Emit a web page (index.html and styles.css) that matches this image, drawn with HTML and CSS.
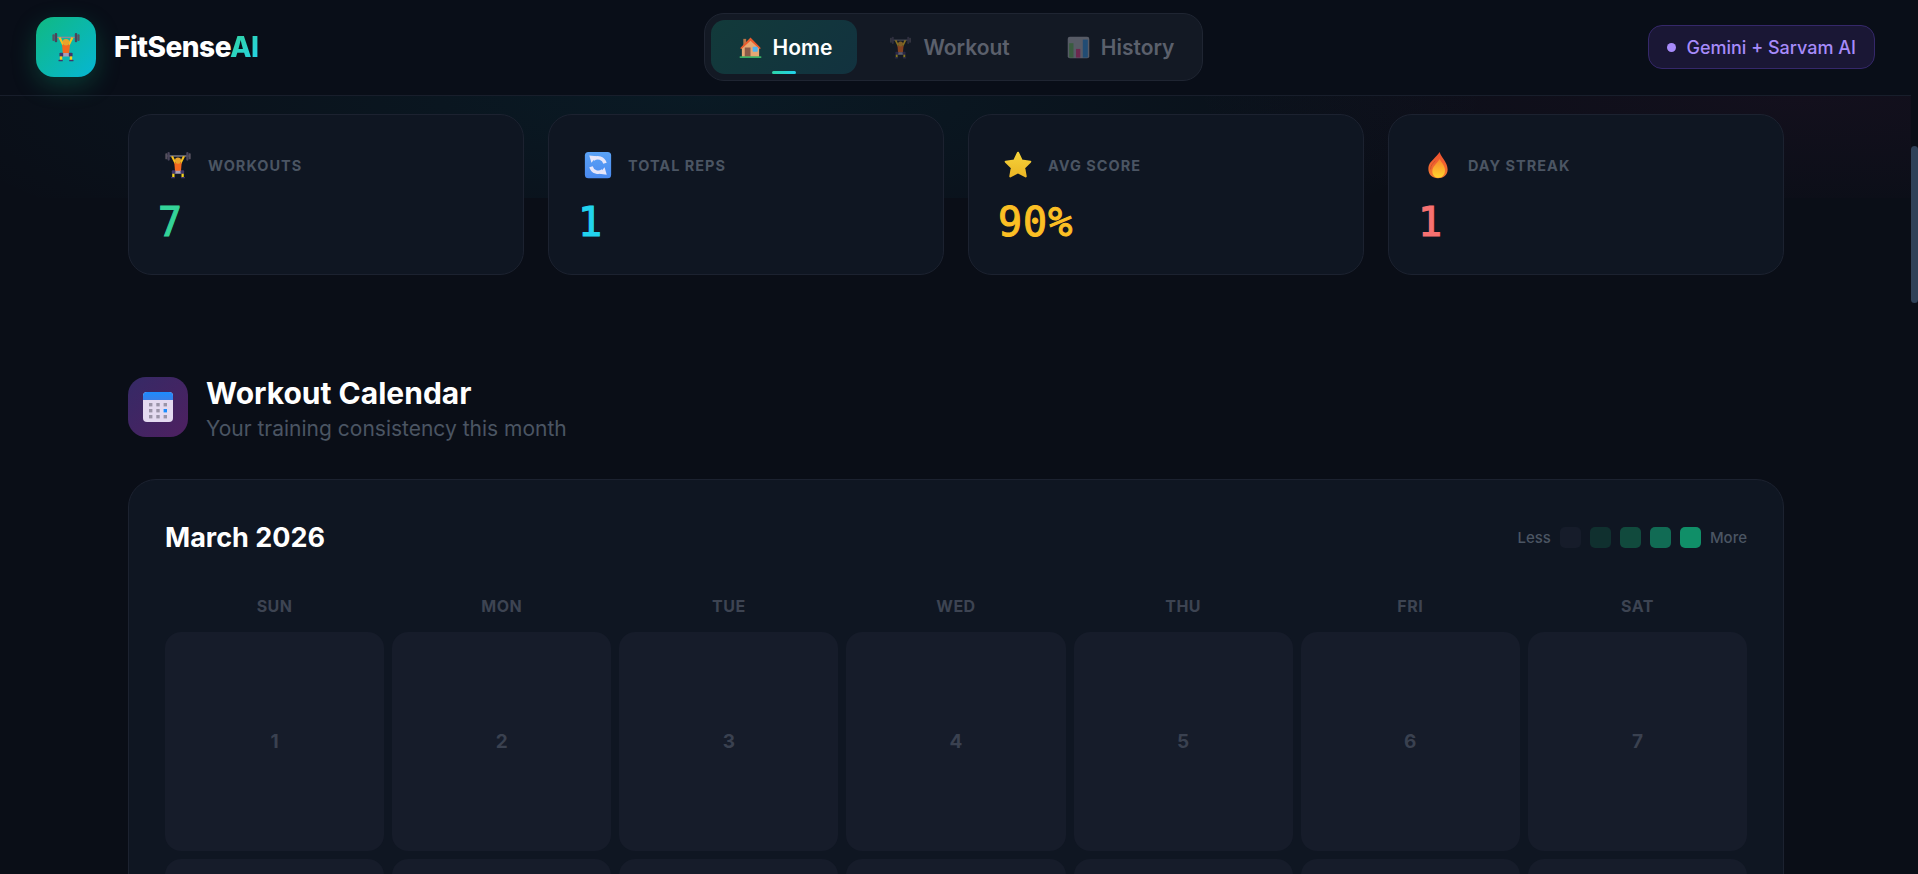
FILE: index.html
```html
<!DOCTYPE html>
<html lang="en">
<head>
  <meta charset="UTF-8">
  <title>FitSenseAI</title>
  <link rel="stylesheet" href="styles.css">
</head>
<body>

  <!-- emoji drawings, reused below -->
  <svg class="defs" width="0" height="0">
    <defs>
      <linearGradient id="syncbg" x1="0" y1="0" x2="0" y2="1">
        <stop offset="0" stop-color="#5aa2f6"/>
        <stop offset="1" stop-color="#4a8af0"/>
      </linearGradient>
      <linearGradient id="stargrad" x1="0" y1="0" x2="0" y2="1">
        <stop offset="0" stop-color="#f5d23a"/>
        <stop offset="1" stop-color="#ecb725"/>
      </linearGradient>
      <linearGradient id="firegrad" x1="0" y1="0" x2="0" y2="1">
        <stop offset="0" stop-color="#ee5030"/>
        <stop offset="1" stop-color="#f27a30"/>
      </linearGradient>
      <linearGradient id="firein" x1="0" y1="0" x2="0" y2="1">
        <stop offset="0" stop-color="#f8852c"/>
        <stop offset="1" stop-color="#ffd52e"/>
      </linearGradient>
      <linearGradient id="calbar" x1="0" y1="0" x2="0" y2="1">
        <stop offset="0" stop-color="#1c8cff"/>
        <stop offset="1" stop-color="#3a7fe8"/>
      </linearGradient>
    </defs>
    <symbol id="lifter" viewBox="0 0 32 32">
      <rect x="4" y="5" width="24" height="1.4" fill="#8d8a96"/>
      <rect x="1.5" y="2.5" width="2.4" height="7" rx="1" fill="#57525f"/>
      <rect x="4" y="1" width="2.6" height="10" rx="1.2" fill="#49445a"/>
      <rect x="25.4" y="1" width="2.6" height="10" rx="1.2" fill="#49445a"/>
      <rect x="28.1" y="2.5" width="2.4" height="7" rx="1" fill="#57525f"/>
      <path d="M8 6.2 L10.4 5.6 L13.4 12 L12.4 15 Z" fill="#f7c11e"/>
      <path d="M24 6.2 L21.6 5.6 L18.6 12 L19.6 15 Z" fill="#f7c11e"/>
      <path d="M11.8 13.5 L20.2 13.5 L19.4 23 L12.6 23 Z" fill="#f4691f"/>
      <circle cx="16" cy="11" r="3.5" fill="#eaa32a"/>
      <path d="M12.6 22.5 H19.4 L20.4 26 H11.6 Z" fill="#a79fb8"/>
      <rect x="9" y="22" width="4" height="4.4" rx="1" fill="#41366a"/>
      <rect x="19" y="22" width="4" height="4.4" rx="1" fill="#41366a"/>
      <rect x="9.4" y="26" width="2.6" height="4" fill="#f3d21e"/>
      <rect x="20" y="26" width="2.6" height="4" fill="#f3d21e"/>
      <rect x="8" y="29.6" width="4.6" height="1.6" rx=".6" fill="#41366a"/>
      <rect x="19.4" y="29.6" width="4.6" height="1.6" rx=".6" fill="#41366a"/>
    </symbol>
    <symbol id="house" viewBox="0 0 32 32">
      <rect x="6" y="4" width="4" height="10" fill="#b8754a"/>
      <path d="M4 15 L16 4 L28 15 V29 H4 Z" fill="#e6a873"/>
      <path d="M1.5 17 L16 2 L30.5 17 L28.5 18 L16 6.5 L3.5 18 Z" fill="#ea5a2c"/>
      <rect x="8" y="16" width="8" height="13" fill="#8a5a48"/>
      <rect x="19" y="15" width="7" height="7" rx="1" fill="#4fb4f0"/>
      <rect x="1" y="28.4" width="30" height="2" fill="#3fc46c"/>
    </symbol>
    <symbol id="bars" viewBox="0 0 32 32">
      <rect x="1" y="1" width="30" height="30" rx="3" fill="#9a9ca8"/>
      <rect x="3" y="10" width="6" height="20" fill="#5f9f5a"/>
      <rect x="12.5" y="18" width="6" height="12" fill="#c23a78"/>
      <rect x="22" y="5" width="7" height="25" fill="#2f7fc4"/>
    </symbol>
    <symbol id="sync" viewBox="0 0 32 32">
      <rect x="1" y="1" width="30" height="30" rx="4" fill="url(#syncbg)"/>
      <path d="M24 14 A8.5 8.5 0 0 0 10.5 9.5" fill="none" stroke="#e6e6fa" stroke-width="4"/>
      <path d="M6 5 L14.5 6 L8.5 13.5 Z" fill="#e6e6fa"/>
      <path d="M8 18 A8.5 8.5 0 0 0 21.5 22.5" fill="none" stroke="#e6e6fa" stroke-width="4"/>
      <path d="M26 27 L17.5 26 L23.5 18.5 Z" fill="#e6e6fa"/>
    </symbol>
    <symbol id="star" viewBox="0 0 32 32">
      <path d="M16 2 L20.2 10.8 L30 12.2 L23 19 L24.8 29 L16 24.4 L7.2 29 L9 19 L2 12.2 L11.8 10.8 Z" fill="url(#stargrad)" stroke="url(#stargrad)" stroke-width="2.4" stroke-linejoin="round"/>
    </symbol>
    <symbol id="fire" viewBox="0 0 32 32">
      <path d="M18 1 C19 7 27 12 27 21 C27 27.5 22 31 16 31 C9.5 31 5 27 5 20.5 C5 14 9 11.5 11.5 8.5 C13.5 6 16 4 18 1 Z" fill="url(#firegrad)"/>
      <path d="M18 9 C19.5 13 24 16 24 22 C24 27 21 30.5 16.5 30.5 C12 30.5 9.5 27 9.5 23 C9.5 18 14 15 18 9 Z" fill="url(#firein)"/>
      <path d="M7.5 21 C7.5 16 10.5 14 13 11" fill="none" stroke="#c9502a" stroke-width="1"/>
    </symbol>
    <symbol id="calendar" viewBox="0 0 30 30">
      <rect x="0" y="0" width="30" height="30" rx="4" fill="#e4daf0"/>
      <path d="M0 8 V4 A4 4 0 0 1 4 0 H26 A4 4 0 0 1 30 4 V8 Z" fill="url(#calbar)"/>
      <g fill="#9b94a8">
        <rect x="6" y="11" width="3.4" height="3.4"/>
        <rect x="13.3" y="11" width="3.4" height="3.4"/>
        <rect x="20.6" y="11" width="3.4" height="3.4"/>
        <rect x="6" y="17" width="3.4" height="3.4"/>
        <rect x="13.3" y="17" width="3.4" height="3.4"/>
        <rect x="6" y="23" width="3.4" height="3.4"/>
        <rect x="13.3" y="23" width="3.4" height="3.4"/>
        <rect x="20.6" y="23" width="3.4" height="3.4"/>
      </g>
      <rect x="20.6" y="17" width="3.4" height="3.4" fill="#1c8cff"/>
    </symbol>
  </svg>

  <div class="page">

    <header class="topbar">
      <div class="brand">
        <div class="brand-icon"><svg class="ico-logo"><use href="#lifter"/></svg></div>
        <div class="brand-name">FitSense<span class="ai">AI</span></div>
      </div>

      <nav class="tabs">
        <a class="tab active"><svg class="ico-tab"><use href="#house"/></svg>Home</a>
        <a class="tab"><svg class="ico-tab"><use href="#lifter"/></svg>Workout</a>
        <a class="tab"><svg class="ico-tab"><use href="#bars"/></svg>History</a>
      </nav>

      <div class="engine"><span class="dot"></span>Gemini + Sarvam AI</div>
    </header>

    <main class="content">

      <!-- stats -->
      <section class="stats">
        <div class="stat">
          <div class="stat-head"><svg class="ico-stat"><use href="#lifter"/></svg>WORKOUTS</div>
          <div class="stat-value green">7</div>
        </div>
        <div class="stat">
          <div class="stat-head"><svg class="ico-stat"><use href="#sync"/></svg>TOTAL REPS</div>
          <div class="stat-value cyan">1</div>
        </div>
        <div class="stat">
          <div class="stat-head"><svg class="ico-stat"><use href="#star"/></svg>AVG SCORE</div>
          <div class="stat-value amber">90%</div>
        </div>
        <div class="stat">
          <div class="stat-head"><svg class="ico-stat"><use href="#fire"/></svg>DAY STREAK</div>
          <div class="stat-value red">1</div>
        </div>
      </section>

      <!-- calendar -->
      <section class="section-head">
        <div class="section-icon"><svg class="ico-cal"><use href="#calendar"/></svg></div>
        <div class="section-text">
          <h2>Workout Calendar</h2>
          <p>Your training consistency this month</p>
        </div>
      </section>

      <section class="calendar">
        <div class="cal-top">
          <h3>March 2026</h3>
          <div class="legend">
            <span>Less</span>
            <i class="lvl l0"></i><i class="lvl l1"></i><i class="lvl l2"></i><i class="lvl l3"></i><i class="lvl l4"></i>
            <span>More</span>
          </div>
        </div>
        <div class="cal-grid">
          <div class="wd">SUN</div><div class="wd">MON</div><div class="wd">TUE</div><div class="wd">WED</div><div class="wd">THU</div><div class="wd">FRI</div><div class="wd">SAT</div>
          <div class="day">1</div><div class="day">2</div><div class="day">3</div><div class="day">4</div><div class="day">5</div><div class="day">6</div><div class="day">7</div>
          <div class="day"></div><div class="day"></div><div class="day"></div><div class="day"></div><div class="day"></div><div class="day"></div><div class="day"></div>
        </div>
      </section>

    </main>
  </div>

  <div class="scrollbar"><div class="thumb"></div></div>

</body>
</html>
```

FILE: styles.css
```css
html, body {
  height: 874px;
  overflow: hidden;
}

body {
  margin: 0;
  display: flex;
  background: #0a0e17;
  color: #fff;
  font-family: Inter, "Liberation Sans", sans-serif;
}

.defs {
  flex: none;
}

.page {
  flex: 1;
  min-width: 0;
  height: 874px;
  overflow: hidden;
}

/* scrollbar */
.scrollbar {
  width: 7px;
  padding-top: 146px;
}

.thumb {
  height: 157px;
  background: #2f4158;
  border-radius: 4px;
}

/* top bar */
.topbar {
  height: 94px;
  padding: 0 36px 1px;
  display: flex;
  align-items: center;
  justify-content: space-between;
  background: #090e18;
  border-bottom: 1px solid #181e2b;
}

.brand {
  display: flex;
  align-items: center;
  gap: 18px;
}

.brand-icon {
  width: 60px;
  height: 60px;
  border-radius: 18px;
  background: linear-gradient(135deg, #10b981, #06b6d4);
  box-shadow: 0 8px 24px rgba(16, 185, 129, 0.25);
  display: flex;
  align-items: center;
  justify-content: center;
}

.ico-logo {
  width: 30px;
  height: 30px;
}

.brand-name {
  font-size: 28px;
  font-weight: 800;
  letter-spacing: -0.5px;
}

.ai {
  background: linear-gradient(135deg, #34d399, #22d3ee);
  -webkit-background-clip: text;
  background-clip: text;
  color: transparent;
}

.tabs {
  display: flex;
  gap: 4px;
  padding: 6px 3px 6px 6px;
  background: #131924;
  border: 1px solid #1f2532;
  border-radius: 20px;
}

.tab {
  position: relative;
  height: 54px;
  padding: 0 25px 0 28px;
  display: flex;
  align-items: center;
  gap: 11px;
  border-radius: 14px;
  font-size: 21px;
  font-weight: 600;
  color: #5b606c;
}

.tab .ico-tab {
  opacity: 0.5;
}

.tab.active {
  color: #fff;
  background: linear-gradient(135deg, #123a3a, #12323f);
}

.tab.active .ico-tab {
  opacity: 1;
}

.tab.active::after {
  content: "";
  position: absolute;
  left: 50%;
  bottom: 0;
  width: 24px;
  height: 3px;
  margin-left: -12px;
  border-radius: 2px;
  background: linear-gradient(90deg, #2dd4a8, #22d3ee);
}

.ico-tab {
  width: 23px;
  height: 23px;
}

.engine {
  height: 44px;
  box-sizing: border-box;
  padding: 0 18px;
  display: flex;
  align-items: center;
  gap: 10px;
  background: #1a1735;
  border: 1px solid #35286a;
  border-radius: 14px;
  font-size: 18px;
  font-weight: 500;
  color: #a78bfa;
}

.dot {
  width: 9px;
  height: 9px;
  border-radius: 50%;
  background: #a78bfa;
}

/* content */
.content {
  padding: 18px 127px 0 128px;
  background-image:
    radial-gradient(ellipse 800px 200px at 700px 0, rgba(6, 182, 212, 0.07), transparent),
    radial-gradient(ellipse 620px 130px at 1800px 0, rgba(190, 50, 140, 0.05), transparent);
  background-size: 100% 102px;
  background-repeat: no-repeat;
}

.stats {
  display: grid;
  grid-template-columns: repeat(4, 1fr);
  gap: 24px;
}

.stat {
  height: 161px;
  box-sizing: border-box;
  padding: 35px 32px 0;
  background: #0f1622;
  border: 1px solid #1c2230;
  border-radius: 24px;
}

.stat-head {
  display: flex;
  align-items: center;
  gap: 16px;
  height: 30px;
  font-size: 14.5px;
  font-weight: 700;
  letter-spacing: 1px;
  color: #4b5563;
}

.ico-stat {
  width: 28px;
  height: 28px;
  margin-left: 3px;
}

.stat-value {
  margin-top: 18px;
  margin-left: -3px;
  font-family: "DejaVu Sans Mono", "Liberation Mono", monospace;
  font-size: 40px;
  font-weight: 400;
  letter-spacing: 1px;
  line-height: 48px;
  -webkit-text-stroke: 1.1px currentColor;
}

.green { color: #34d399; }
.cyan { color: #22d3ee; }
.amber { color: #fbbf24; }
.red { color: #f87171; }

.section-head {
  margin-top: 102px;
  display: flex;
  align-items: flex-start;
  gap: 18px;
}

.section-icon {
  width: 60px;
  height: 60px;
  border-radius: 18px;
  background: linear-gradient(135deg, #352a66, #4e2060);
  display: flex;
  align-items: center;
  justify-content: center;
}

.ico-cal {
  width: 30px;
  height: 30px;
}

.section-text {
  margin-top: -2px;
}

.section-head h2 {
  margin: 0;
  font-size: 30px;
  font-weight: 700;
  line-height: 36px;
}

.section-head p {
  margin: 3px 0 0;
  font-size: 21px;
  line-height: 30px;
  color: #4b5563;
}

.calendar {
  margin-top: 35px;
  padding: 36px 36px 0;
  background: #0f1622;
  border: 1px solid #1c2230;
  border-radius: 28px;
}

.cal-top {
  display: flex;
  align-items: center;
  justify-content: space-between;
  height: 42px;
}

.cal-top h3 {
  margin: 0;
  font-size: 27px;
  font-weight: 700;
}

.legend {
  display: flex;
  align-items: center;
  gap: 9px;
  font-size: 15px;
  font-weight: 500;
  color: #4b5563;
}

.lvl {
  width: 21px;
  height: 21px;
  border-radius: 5px;
}

.l0 { background: #161c2a; }
.l1 { background: #10302f; }
.l2 { background: #114a3d; }
.l3 { background: #116b54; }
.l4 { background: #108f68; }

.cal-grid {
  margin-top: 38px;
  display: grid;
  grid-template-columns: repeat(7, 1fr);
  gap: 8px;
}

.wd {
  height: 18px;
  margin-bottom: 10px;
  text-align: center;
  font-size: 16px;
  font-weight: 700;
  letter-spacing: 0.5px;
  color: #3d4452;
}

.day {
  aspect-ratio: 1;
  display: flex;
  align-items: center;
  justify-content: center;
  background: #161c2a;
  border-radius: 16px;
  font-size: 19px;
  font-weight: 700;
  color: #3a4150;
}
```
